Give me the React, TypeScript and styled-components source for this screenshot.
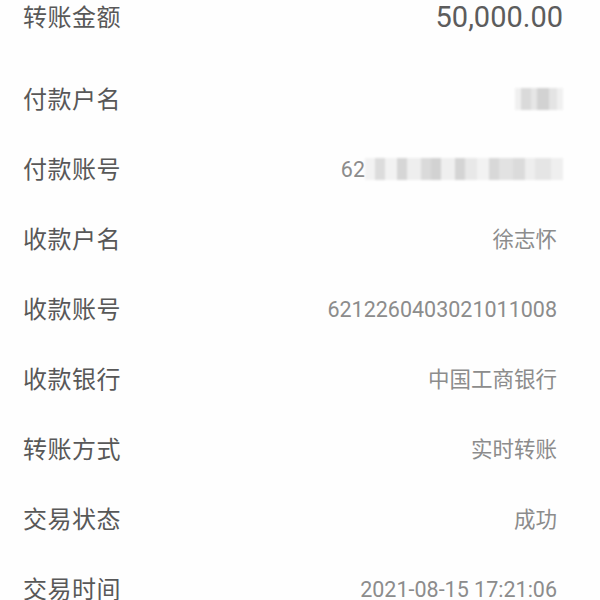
import React from "react";
import styled, { createGlobalStyle } from "styled-components";

const GlobalStyle = createGlobalStyle`
  html, body {
    margin: 0;
    padding: 0;
    background: #ffffff;
  }
  body {
    font-family: Roboto, "Noto Sans CJK SC", sans-serif;
  }
`;

const Page = styled.div`
  width: 600px;
  height: 600px;
  overflow: hidden;
  background: #fefefe;
`;

const List = styled.div`
  display: flex;
  flex-direction: column;
  padding-top: 1px;
`;

const Row = styled.div<{ $amount?: boolean }>`
  display: flex;
  align-items: center;
  justify-content: space-between;
  height: ${(p) => (p.$amount ? "30px" : "70px")};
  margin-bottom: ${(p) => (p.$amount ? "32.25px" : "0")};
  padding: 0 ${(p) => (p.$amount ? "37px" : "43px")} 0 23px;
`;

const Label = styled.span`
  font-size: 24px;
  line-height: 28px;
  color: #585858;
  letter-spacing: 0.5px;
  font-family: "Noto Sans CJK SC", sans-serif;
`;

const Value = styled.span`
  font-size: 21.5px;
  line-height: 28px;
  padding-top: 4px;
  color: #8c8c8c;
  white-space: nowrap;
`;

const Amount = styled.span`
  font-size: 29px;
  line-height: 30px;
  padding-top: 2px;
  color: #5c5c5c;
`;

const Masked = styled.span`
  display: flex;
  align-items: center;
`;

const Pixels = styled.span`
  display: flex;
  height: 22px;
  margin-top: 2px;
  margin-right: -6px;
  filter: blur(1.2px);
`;

const Pixel = styled.span<{ $w: number; $c: string }>`
  width: ${(p) => p.$w}px;
  height: 100%;
  background: ${(p) => p.$c};
`;

const nameBlocks: [number, string][] = [
  [6, "#f0f0f0"],
  [10, "#dadada"],
  [6, "#e6e6e6"],
  [12, "#d2d2d2"],
  [8, "#e4e4e4"],
  [6, "#f0f0f0"],
];

const accountBlocks: [number, string][] = [
  [10, "#f2f2f2"],
  [10, "#dcdcdc"],
  [12, "#f2f2f2"],
  [10, "#d6d6d6"],
  [14, "#eeeeee"],
  [10, "#dadada"],
  [10, "#d2d2d2"],
  [14, "#efefef"],
  [10, "#d4d4d4"],
  [12, "#e8e8e8"],
  [12, "#f2f2f2"],
  [10, "#d8d8d8"],
  [14, "#e2e2e2"],
  [12, "#dbdbdb"],
  [10, "#eeeeee"],
  [16, "#e5e5e5"],
  [12, "#efefef"],
];

const rows: [string, string][] = [
  ["收款户名", "徐志怀"],
  ["收款账号", "6212260403021011008"],
  ["收款银行", "中国工商银行"],
  ["转账方式", "实时转账"],
  ["交易状态", "成功"],
  ["交易时间", "2021-08-15 17:21:06"],
];

export default function App() {
  return (
    <Page>
      <GlobalStyle />
      <List>
        <Row $amount>
          <Label>转账金额</Label>
          <Amount>50,000.00</Amount>
        </Row>
        <Row>
          <Label>付款户名</Label>
          <Pixels>
            {nameBlocks.map(([w, c], i) => (
              <Pixel key={i} $w={w} $c={c} />
            ))}
          </Pixels>
        </Row>
        <Row>
          <Label>付款账号</Label>
          <Masked>
            <Value>62</Value>
            <Pixels>
              {accountBlocks.map(([w, c], i) => (
                <Pixel key={i} $w={w} $c={c} />
              ))}
            </Pixels>
          </Masked>
        </Row>
        {rows.map(([label, value]) => (
          <Row key={label}>
            <Label>{label}</Label>
            <Value>{value}</Value>
          </Row>
        ))}
      </List>
    </Page>
  );
}
